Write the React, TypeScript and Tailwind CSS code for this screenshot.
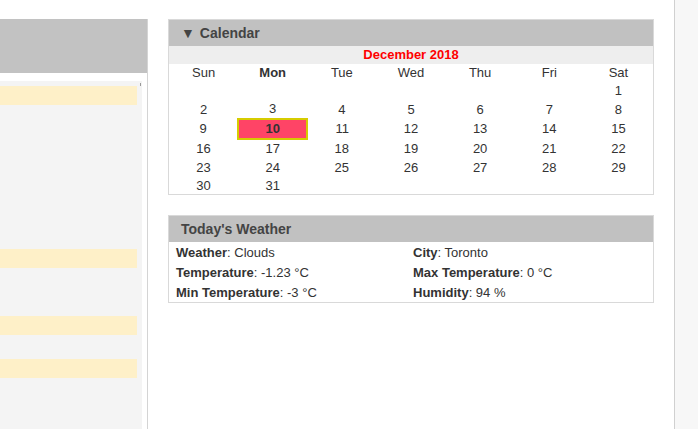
const days = ["Sun", "Mon", "Tue", "Wed", "Thu", "Fri", "Sat"];

const weeks: (number | null)[][] = [
  [null, null, null, null, null, null, 1],
  [2, 3, 4, 5, 6, 7, 8],
  [9, 10, 11, 12, 13, 14, 15],
  [16, 17, 18, 19, 20, 21, 22],
  [23, 24, 25, 26, 27, 28, 29],
  [30, 31, null, null, null, null, null],
];

const rowHeights = ["h-[18px]", "h-[19px]", "h-[20px]", "h-[19px]", "h-[19px]", "h-[17px]"];

function Calendar() {
  return (
    <div className="border border-[#d9d9d9] bg-white">
      <div className="h-[26px] bg-[#c1c1c1] pl-[12px] text-[14px] font-bold leading-[26px] text-[#444]">
        <span className="mr-[5px] text-[14px]">▼</span>Calendar
      </div>
      <div className="h-[18px] bg-[#eeeeee] text-center text-[13px] font-bold leading-[18px] text-[#ff0000]">
        December 2018
      </div>
      <table className="w-full table-fixed border-collapse text-[13px] text-[#333]">
        <thead>
          <tr className="h-[18px]">
            {days.map((d) => (
              <th
                key={d}
                className={`p-0 text-center leading-[18px] ${
                  d === "Mon" ? "font-bold" : "font-normal"
                }`}
              >
                {d}
              </th>
            ))}
          </tr>
        </thead>
        <tbody>
          {weeks.map((w, i) => (
            <tr key={i} className={rowHeights[i]}>
              {w.map((n, j) =>
                n === 10 ? (
                  <td
                    key={j}
                    className="border-2 border-[#d6cc00] bg-[#ff4466] p-0 text-center font-bold leading-[16px]"
                  >
                    {n}
                  </td>
                ) : (
                  <td key={j} className="p-0 text-center leading-[16px]">
                    {n ?? ""}
                  </td>
                )
              )}
            </tr>
          ))}
        </tbody>
      </table>
    </div>
  );
}

function Field({ label, value }: { label: string; value: string }) {
  return (
    <div className="h-[20px] leading-[20px]">
      <span className="font-bold">{label}</span>: {value}
    </div>
  );
}

function Weather() {
  return (
    <div className="border border-[#d9d9d9] bg-white">
      <div className="h-[26px] bg-[#c1c1c1] pl-[12px] text-[14px] font-bold leading-[26px] text-[#444]">
        Today's Weather
      </div>
      <div className="grid h-[60px] grid-cols-[237px_1fr] pl-[7px] pt-[1px] text-[13px] text-[#333]">
        <div>
          <Field label="Weather" value="Clouds" />
          <Field label="Temperature" value="-1.23 °C" />
          <Field label="Min Temperature" value="-3 °C" />
        </div>
        <div>
          <Field label="City" value="Toronto" />
          <Field label="Max Temperature" value="0 °C" />
          <Field label="Humidity" value="94 %" />
        </div>
      </div>
    </div>
  );
}

export default function App() {
  return (
    <div
      className="flex h-[429px] w-full overflow-hidden bg-white"
      style={{ fontFamily: '"Liberation Sans", Arial, sans-serif' }}
    >
      <div className="mt-[19px] w-[148px] shrink-0 border-r border-[#d4d4d4]">
        <div className="h-[54px] bg-[#c2c2c2]" />
        <div className="relative mt-[8px] h-full w-[142px] bg-[#f4f4f4] pt-[5px]">
          <div className="absolute right-[1px] top-[2px] h-[3px] w-[1px] bg-[#999]" />
          <div className="h-[19px] w-[137px] bg-[#fef0c8]" />
          <div className="mt-[144px] h-[19px] w-[137px] bg-[#fef0c8]" />
          <div className="mt-[48px] h-[19px] w-[137px] bg-[#fef0c8]" />
          <div className="mt-[24px] h-[19px] w-[137px] bg-[#fef0c8]" />
        </div>
      </div>
      <div className="ml-[20px] mt-[19px] flex w-[486px] shrink-0 flex-col gap-[20px]">
        <Calendar />
        <Weather />
      </div>
      <div className="ml-[20px] flex-1 border-l border-[#d0d0d0] bg-[#f7f7f7]" />
    </div>
  );
}
